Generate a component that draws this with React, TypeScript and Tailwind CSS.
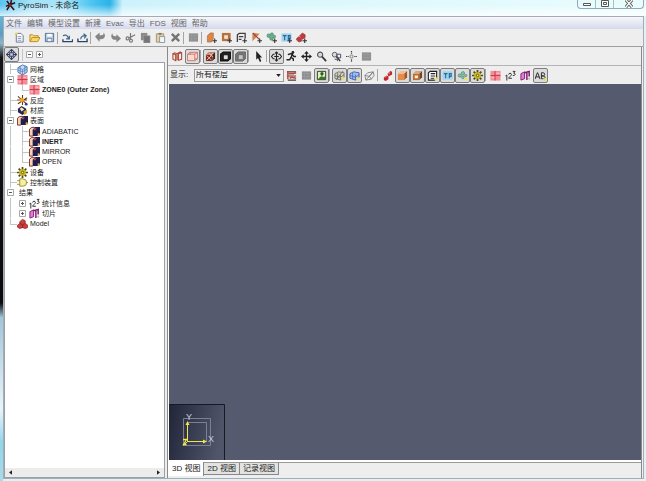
import React, { useState } from "react";

type IconName =
  | "logo" | "file" | "open" | "save" | "import" | "export" | "undo" | "redo" | "cut" | "copy" | "paste"
  | "delete" | "grayBox" | "newObst" | "newHole" | "newVent" | "newSlab" | "newPart" | "newInit" | "newGroup"
  | "wire" | "wireBox" | "texture" | "boxDark" | "boxGray" | "arrow" | "orbit" | "walk" | "pan" | "zoom"
  | "zoomBox" | "reset" | "floorRed" | "picture" | "meshA" | "meshB" | "meshC" | "redSlice" | "obst" | "hole"
  | "vent" | "init" | "particles" | "gear" | "zone" | "numbers" | "slice" | "label" | "mesh" | "reaction"
  | "material" | "surface" | "control" | "model" | "target";

const plus = <path d="M9.5 7v5M7 9.5h5" stroke="#333" strokeWidth="1.2" />;
const cube = (fill: string, side: string, top: string) => (
  <>
    <path d="M1 4h7v7H1z" fill={fill} />
    <path d="M1 4l3-3h7L8 4z" fill={top} />
    <path d="M8 4l3-3v7l-3 3z" fill={side} />
  </>
);
const tiGlyph = (
  <>
    <path d="M0.5 1.5h11v9h-11z" fill="#9fd3ee" />
    <path d="M2 4h4M4 4v5M8 9V4h2v3H8" stroke="#24699a" strokeWidth="1.2" fill="none" />
  </>
);
const numberGlyphs = (
  <>
    <path d="M0.5 6.5l1.5-1v6" stroke="#222" fill="none" />
    <path d="M4 5c0-2 3-2 3 0 0 1-3 3-3 4h3.5" stroke="#222" fill="none" />
    <path d="M8.5 1.5H11L9.5 3.5c2.500 0 2 3-1 2.500" stroke="#222" fill="none" />
  </>
);

const shapes: Record<IconName, React.ReactNode> = {
  logo: (
    <>
      <path d="M2 1l3 4-4 2M7 0l-1 5 5-2M6 6l4 5M5 6l-3 5" stroke="#3a1016" strokeWidth="1.7" fill="none" />
      <circle cx="5.5" cy="5.5" r="1.5" fill="#8d1d24" />
    </>
  ),
  file: (
    <>
      <path d="M2.5 1.5h5L10 4v7H2.500z" fill="#fff" stroke="#5f6f91" />
      <path d="M4 5h4M4 7h4M4 9h4" stroke="#8796b3" />
      <path d="M1 1h3v2H1z" fill="#f1cf5a" />
    </>
  ),
  open: (
    <>
      <path d="M1 10V3h3l1 1h5v2" fill="#f5dc8b" stroke="#b98b22" />
      <path d="M1 10.5L3.500 6H12l-2.500 4.500z" fill="#fbd767" stroke="#b98b22" />
    </>
  ),
  save: (
    <>
      <path d="M1.5 1.5h9v9h-9z" fill="#b9cde2" stroke="#4c6a91" />
      <path d="M3.5 2h5v3h-5z" fill="#fff" />
      <path d="M3.5 7h5v3.5h-5z" fill="#eef4fb" stroke="#4c6a91" strokeWidth=".7" />
    </>
  ),
  import: (
    <>
      <path d="M1 8v2.500h10.500V8" fill="none" stroke="#2b4567" strokeWidth="1.5" />
      <path d="M1 4c3-1.500 5-.5 6 3M4.500 7.500H8V4" fill="none" stroke="#3c678f" strokeWidth="1.3" />
    </>
  ),
  export: (
    <>
      <path d="M1 7v3.500h10V7" fill="none" stroke="#2b4567" strokeWidth="1.5" />
      <path d="M4 8c0-3 2-4 5-4M7 2l3 2-2 3" fill="none" stroke="#3c678f" strokeWidth="1.3" />
    </>
  ),
  undo: <path d="M0 5l5-4.500v3h2c2 0 2.500-1 2.500-3 3.500 5-.5 7.500-3 7.500H5v3z" fill="#858585" />,
  redo: <path d="M12 7L7 2.500v2H5.500C3.500 4.500 2.500 3 2.500 1-.5 6 3 8.500 5.500 8.500H7v3z" fill="#858585" />,
  cut: (
    <g fill="none" stroke="#777" strokeWidth="1.3">
      <path d="M4.500 6.500L11 3M6 1v7" />
      <circle cx="2.8" cy="7" r="1.6" />
      <circle cx="6.5" cy="9.5" r="1.6" />
    </g>
  ),
  copy: (
    <>
      <path d="M1 1h7v8H1z" fill="#8b8b8b" />
      <path d="M4 4h7v8H4z" fill="#777" stroke="#a5a5a5" strokeWidth=".6" />
    </>
  ),
  paste: (
    <>
      <path d="M1.500 2h8v9h-8z" fill="#e7cf9c" stroke="#a08f6e" />
      <path d="M4 1h3v2H4z" fill="#777" />
      <path d="M5 5h5.500v6.500H5z" fill="#f5f5f5" stroke="#8794a5" />
    </>
  ),
  delete: <path d="M2 2l8 8M10 2l-8 8" stroke="#747474" strokeWidth="2.6" />,
  grayBox: (
    <>
      <path d="M1 1.500h10v9H1z" fill="#8f8f8f" />
      <path d="M1 4h10M1 7h10M4 2v8M7.500 2v8" stroke="#a2a2a2" strokeWidth=".6" />
    </>
  ),
  newObst: (
    <>
      <path d="M1.500 4l3-3h3.500v6l-2 4H1.500z" fill="#dd8548" stroke="#a05c2c" strokeWidth=".6" />
      {plus}
    </>
  ),
  newHole: (
    <>
      <path d="M1 1h9.500v9H1z" fill="#b5713f" />
      <path d="M3.500 3.500h4v4h-4z" fill="#f7e4cf" />
      {plus}
    </>
  ),
  newVent: (
    <>
      <path d="M1.500 11V3l2-1.500H10V7M3 5h5M3 8h3" fill="none" stroke="#404040" strokeWidth="1.4" />
      {plus}
    </>
  ),
  newSlab: (
    <>
      <path d="M1.500 1v9l3-3 5-5z" fill="#d18358" />
      <path d="M2 1l7 7" stroke="#a04030" strokeWidth="1.3" />
      {plus}
    </>
  ),
  newPart: (
    <>
      <g fill="#65b18b" stroke="#39775b" strokeWidth=".5">
        <circle cx="3" cy="4" r="2" /><circle cx="6.500" cy="2.500" r="1.600" />
        <circle cx="6" cy="7" r="2" /><circle cx="9" cy="5" r="1.500" />
      </g>
      {plus}
    </>
  ),
  newInit: <>{tiGlyph}{plus}</>,
  newGroup: (
    <>
      <g fill="#c43a3a" stroke="#7e1a1a" strokeWidth=".5">
        <path d="M4 4l3-3 3 2v3L7 8z" /><path d="M0 8l3-3 3 2v3l-3 1z" />
      </g>
      {plus}
    </>
  ),
  wire: (
    <g fill="none" stroke="#b0493b" strokeWidth="1.2">
      <path d="M1 3v6l3 1.500V4zM1 3l2-1 2.500 1v7M7 3v7l3.500-1V2zM10.500 2L9 1 5.500 3" />
    </g>
  ),
  wireBox: (
    <g fill="#f7d9d2" stroke="#c9786c">
      <path d="M3.500 1.500h8v7h-8z" /><path d="M.5 3.500h8v7h-8z" /><path d="M.5 3.500l3-2M8.500 3.500l3-2M8.500 10.500l3-2" />
    </g>
  ),
  texture: (
    <>
      {cube("#7d3028", "#4b2420", "#c97b65")}
      <path d="M2 5l5 5M7 5l-5 5M4 2l5 5M9 2L6 5" stroke="#f0d3c5" strokeWidth=".9" />
    </>
  ),
  boxDark: (
    <g fill="#222" stroke="#111" strokeWidth="1.1">
      <path d="M.5 3.500l3-2.500h8v7.500l-3 2.500h-8z" /><path d="M3.500 4h5.500v5.500H3.500z" fill="#ddd" />
    </g>
  ),
  boxGray: (
    <g fill="#777" stroke="#666">
      <path d="M.5 3.500l3-2.500h8v7.500l-3 2.500h-8z" /><path d="M3.500 4h5.500v5.500H3.500z" fill="#c4c4c4" />
    </g>
  ),
  arrow: <path d="M3.500 0v9.500l2-2L7.500 12l1.500-.7L7.500 7H10z" fill="#222" />,
  orbit: (
    <g fill="none" stroke="#222" strokeWidth="1.2">
      <path d="M4 3.500H2.500L.5 6l2 2.500H4M8 3.500h1.500l2 2.500-2 2.500H8M6 1v10M4.500 2.500L6 1l1.500 1.500M4.500 9.500L6 11l1.500-1.500M3.500 6h5" />
    </g>
  ),
  walk: (
    <g fill="none" stroke="#222" strokeWidth="1.5">
      <circle cx="7.5" cy="1.5" r=".8" />
      <path d="M2 4l3-1h2L5.500 7 8 8.500V11M5.500 7L4 9.500H.5M7 4l1.500 2H11" />
    </g>
  ),
  pan: (
    <g stroke="#222" fill="#222">
      <path d="M6 2v8M2 6h8" strokeWidth="1.4" />
      <path d="M6 0l2.500 3h-5zM6 12l2.500-3h-5zM0 6l3-2.500v5zM12 6L9 3.500v5z" stroke="none" />
    </g>
  ),
  zoom: (
    <>
      <circle cx="4.500" cy="4" r="2.8" fill="#d4dce5" stroke="#555" strokeWidth="1.2" />
      <path d="M6.500 6l4.500 5" stroke="#3b3630" strokeWidth="2" />
    </>
  ),
  zoomBox: (
    <>
      <circle cx="4" cy="4" r="2.6" fill="#d4dce5" stroke="#555" />
      <path d="M6 6l4 5" stroke="#333" strokeWidth="1.6" />
      <path d="M6.500 3.500h4v4h-4zM4 9h3v2" fill="none" stroke="#445" />
    </>
  ),
  reset: (
    <g stroke="#444" fill="none">
      <path d="M6 0v3M6 9v3M0 6h3M9 6h3" strokeDasharray="1.5 .6" strokeWidth="1.3" />
      <path d="M4.500 4.500h3v3h-3z" stroke="#888" />
    </g>
  ),
  floorRed: (
    <>
      <path d="M1 2h10M1 6.500h10M2 11h9" stroke="#4d3632" strokeWidth="1.2" />
      <path d="M2 1v9M3 4h5l3-1M4 9l2-1 5 1" stroke="#c24437" strokeWidth="1.6" fill="none" />
    </>
  ),
  picture: (
    <>
      <path d="M1.500 1.500h9v9h-9z" fill="#e3efb5" stroke="#293b21" />
      <path d="M2 10l3-3 2 1 3-1v3z" fill="#367832" /><circle cx="6.500" cy="4" r="1.8" fill="#2b5e2d" />
      <path d="M6.500 4v5" stroke="#2b5e2d" />
    </>
  ),
  meshA: (
    <>
      <path d="M1 4l4-2 6 1v5l-4 3-6-2z" fill="#dcd6ab" stroke="#777" />
      <path d="M1 6l6 2 4-3M4 3v7M7 5v6M2 11l8-10" stroke="#5f6577" fill="none" strokeWidth=".9" />
      <path d="M8 8h3v3H8z" fill="#eedb7a" />
    </>
  ),
  meshB: (
    <>
      <path d="M1 4l4-2 6 1v5l-4 3-6-2z" fill="#9fbef3" stroke="#3e60a8" />
      <path d="M1 6l6 2 4-3M4 3v7M7 5v6" stroke="#3d62bb" fill="none" strokeWidth=".8" />
      <path d="M8 8h3v3H8z" fill="#eedb7a" />
    </>
  ),
  meshC: (
    <path d="M1 6l3-3 6-1 1 4-3 4-6 1zM2 11L10 2M1 6l5 1 4-5M6 7l2 3" fill="none" stroke="#777" strokeWidth=".9" />
  ),
  redSlice: (
    <>
      <path d="M6 4l3-3 2 1v3L7 7zM2 8l3-2 2 1v3l-3 2-2-1z" fill="#c4232c" />
      <path d="M7 4l2-1M3 8l2-1" stroke="#f2a0a0" />
    </>
  ),
  obst: cube("#e68b4b", "#a95325", "#f5bd8a"),
  hole: (
    <>
      {cube("#bb6b3c", "#7d4221", "#dba47a")}
      <path d="M3 6h3.500v3H3z" fill="#fff1c8" />
    </>
  ),
  vent: (
    <>
      <path d="M1.500 11V3l2-1.500h7V9L8 11zM4 4h5M4 6.500h5M4 9h4" fill="#fff" stroke="#222" strokeWidth="1.2" />
      <path d="M8 8h3v3H8z" fill="#eedb7a" />
    </>
  ),
  init: tiGlyph,
  particles: (
    <g fill="#7fc2a0" stroke="#3e7c74" strokeWidth=".6">
      <circle cx="3" cy="6" r="1.8" /><circle cx="6.500" cy="3.500" r="1.8" />
      <circle cx="6.500" cy="8" r="1.6" /><circle cx="9.500" cy="6" r="1.3" />
      <path d="M8 8h3v3H8z" fill="#f2df62" stroke="none" />
    </g>
  ),
  gear: (
    <>
      <path d="M6 0v12M0 6h12M1.800 1.800l8.400 8.400M10.200 1.800L1.800 10.200" stroke="#514b12" strokeWidth="1.9" />
      <circle cx="6" cy="6" r="3.6" fill="#cdb91c" /><circle cx="6" cy="6" r="1.3" fill="#f5efb0" stroke="#5a5210" />
    </>
  ),
  zone: (
    <>
      <path d="M.5 1h11v10.500H.5z" fill="#f58c96" /><path d="M5.500 1v10.500M.5 6h11" stroke="#c23a48" />
      <path d="M7 3.500h3M2 8.500h2.500" stroke="#fbdcdf" />
    </>
  ),
  numbers: numberGlyphs,
  slice: (
    <>
      <path d="M1 4l4-2v7.500L1 11z" fill="#e27fd4" stroke="#7d1b74" />
      <path d="M5 3l5-1.500V7M7.500 2.500V11" stroke="#7d1b74" strokeWidth="1.6" fill="none" />
      <circle cx="10" cy="9.500" r="1.2" fill="#bbb" />
    </>
  ),
  label: (
    <>
      <path d="M0 10l2.500-7H3l2.500 7M1 7.500h3.500" stroke="#222" fill="none" />
      <path d="M7 3v6.500h2c2.500 0 2.500-3 0-3H7h2c2 0 2-3.500 0-3.500z" stroke="#222" fill="none" />
      <path d="M9 9h3v3H9z" fill="#eedb62" />
    </>
  ),
  mesh: (
    <>
      <path d="M1 4l5-3 5 2v6l-5 3-5-3z" fill="#c7dcf5" stroke="#4170b0" />
      <path d="M1 6.500l5 2 5-3M1 4l5 2 5-3M6 6v6M3.500 2.500v8M8.500 2v8" stroke="#4170b0" fill="none" strokeWidth=".7" />
    </>
  ),
  reaction: (
    <>
      <path d="M6 0v11M1 1.500l9 8M11 3L1 9.500M0 5.500h11" stroke="#6b3a11" strokeWidth="1.2" />
      <circle cx="5.500" cy="5.500" r="2.3" fill="#f1a41d" /><circle cx="10" cy="10" r="1.5" fill="#333c8e" />
    </>
  ),
  material: (
    <>
      <path d="M1 4l4-3 5 3v4l-4 3-5-3z" fill="#262457" />
      <path d="M3 4l2-1.500L8 5 5 7z" fill="#f6eab9" /><path d="M7 7l4-2v4L8 11z" fill="#d4a622" />
    </>
  ),
  surface: (
    <>
      <path d="M.5 3.500L3 1.500h3V9l-2 2H.5z" fill="#f6d3b0" stroke="#7c2425" />
      <path d="M4 4l3-3h5v8l-2 2H4z" fill="#221c4d" />
      <path d="M5.500 2.500h3L7 4.500H5z" fill="#b0524a" />
      <path d="M9.500 8h2v3h-2z" fill="#e4b54a" />
    </>
  ),
  control: <path d="M0 4h3M0 8h3M3 2h3.500a4 4 0 010 8H3zM10 6h2" fill="#f7f0a2" stroke="#9a8d2d" />,
  model: (
    <g fill="#d03c3c" stroke="#7e1717" strokeWidth=".7">
      <path d="M3 4l3-2.500L9 3v3L6 7.500 3 6z" /><path d="M.5 8L3 6l3 1.500v3L3 11.500.5 10z" />
      <path d="M6 8l3-2 2.500 1.500v3L9 11.500 6 10.500z" />
    </g>
  ),
  target: (
    <g fill="none" stroke="#333a5c" strokeWidth="1.1">
      <path d="M6 .5L11.500 6 6 11.500.5 6zM6 1v10M1 6h10" /><path d="M4 4h4v4H4z" fill="#c3cbec" />
    </g>
  ),
};

function Icon({ name }: { name: IconName }) {
  return (
    <svg viewBox="0 0 12 12" className="h-[11px] w-[11px] shrink-0" aria-hidden="true">
      {shapes[name]}
    </svg>
  );
}

type ToolItem = IconName | "|" | `*${IconName}`;

function Tools({ items }: { items: ToolItem[] }) {
  return (
    <>
      {items.map((item, i) => {
        if (item === "|") return <span key={i} className="mr-[2px] h-3 w-px shrink-0 bg-[#a5a5a5]" />;
        const pressed = item.startsWith("*");
        const name = (pressed ? item.slice(1) : item) as IconName;
        return (
          <button
            key={i}
            type="button"
            aria-label={name}
            aria-pressed={pressed}
            className={
              pressed
                ? "flex h-[15px] w-[15px] shrink-0 items-center justify-center rounded-xs border border-[#7d7d7d] bg-[#dcdcdc]"
                : "flex h-[15px] w-[15px] shrink-0 items-center justify-center"
            }
          >
            <Icon name={name} />
          </button>
        );
      })}
    </>
  );
}

type Row = { text: string; icon?: IconName; level: 1 | 2; box?: "+" | "-"; bold?: boolean; last?: boolean };

const rows: Row[] = [
  { text: "网格", icon: "mesh", level: 1 },
  { text: "区域", icon: "zone", level: 1, box: "-" },
  { text: "ZONE0 (Outer Zone)", icon: "zone", level: 2, bold: true, last: true },
  { text: "反应", icon: "reaction", level: 1 },
  { text: "材质", icon: "material", level: 1 },
  { text: "表面", icon: "surface", level: 1, box: "-" },
  { text: "ADIABATIC", icon: "surface", level: 2 },
  { text: "INERT", icon: "surface", level: 2, bold: true },
  { text: "MIRROR", icon: "surface", level: 2 },
  { text: "OPEN", icon: "surface", level: 2, last: true },
  { text: "设备", icon: "gear", level: 1 },
  { text: "控制装置", icon: "control", level: 1 },
  { text: "结果", level: 1, box: "-" },
  { text: "统计信息", icon: "numbers", level: 2, box: "+" },
  { text: "切片", icon: "slice", level: 2, box: "+", last: true },
  { text: "Model", icon: "model", level: 1, last: true },
];

function Guide({ branch, last }: { branch?: boolean; last?: boolean }) {
  return (
    <svg className="h-full w-3 shrink-0" aria-hidden="true">
      <line x1="5.5" y1="0" x2="5.5" y2={last ? "50%" : "100%"} stroke="#c4c4c4" />
      {branch && <line x1="5" y1="5.5" x2="12" y2="5.5" stroke="#c4c4c4" />}
    </svg>
  );
}

function BoxGlyph({ kind }: { kind: "+" | "-" }) {
  return (
    <svg viewBox="0 0 7 7" className="h-[7px] w-[7px]" aria-hidden="true">
      <path d="M.5 .5h6v6h-6z" fill="#fff" stroke="#a8a8a8" />
      <path d={kind === "+" ? "M2 3.5h3M3.5 2v3" : "M2 3.5h3"} stroke="#555" />
    </svg>
  );
}

function TreeRow({ row }: { row: Row }) {
  return (
    <li className="flex min-h-0 items-center leading-none">
      {row.level === 2 && <Guide />}
      {row.box ? (
        <button type="button" aria-label={row.text} className="flex h-full w-3 shrink-0 items-center pl-[2px]">
          <BoxGlyph kind={row.box} />
        </button>
      ) : (
        <Guide branch last={row.last} />
      )}
      {row.icon && <Icon name={row.icon} />}
      <span className={row.bold ? "ml-[2px] font-bold whitespace-nowrap" : "ml-[2px] whitespace-nowrap"}>{row.text}</span>
    </li>
  );
}

const menus = ["文件", "编辑", "模型设置", "新建", "Evac", "导出", "FDS", "视图", "帮助"];
const tabs = ["3D 视图", "2D 视图", "记录视图"];

export default function App() {
  const [tab, setTab] = useState(0);
  return (
    <div className="flex h-screen flex-col overflow-hidden bg-[#dff2f8] bg-[linear-gradient(to_bottom,#6fcdf2_0%,#5a9ec2_7%,#8fb4c8_9%,#141414_12%,#0b0b0b_63%,#9fc6dc_66%,#e8f5fa_85%,#8fd6ee_92%,#a9dcea_100%)] bg-[length:3px_100%] bg-no-repeat pr-[2px] pb-[2px] pl-[3px] font-['Liberation_Sans','Noto_Sans_CJK_SC',sans-serif] text-[8px] leading-none text-[#222]">
      <header className="-mr-[2px] -ml-[3px] flex h-4 shrink-0 items-start justify-between bg-[#e3f9fc] bg-[linear-gradient(to_bottom,transparent_30%,#ffffffc0_100%),linear-gradient(to_right,#58c4f0_0%,#a8e2f7_5%,#a5e2f8_10%,#4fc6f0_14%,#2bb2e8_17%,#ccf2fb_19%,#d9f7fd_40%,#eafcfd_100%)] pl-[5px]">
        <h1 className="flex items-center gap-[2px] text-[8px]">
          <Icon name="logo" />
          <span>PyroSim - 未命名</span>
        </h1>
        <div className="mr-[2px] flex h-[9px] rounded-b-sm border border-t-0 border-[#93a9b1]">
          <button type="button" aria-label="最小化" className="flex w-[18px] items-center justify-center border-r border-[#a9bdc4]">
            <svg viewBox="0 0 8 8" className="h-2 w-2"><path d="M.5 3.5h7v2h-7z" fill="#fff" stroke="#555" /></svg>
          </button>
          <button type="button" aria-label="最大化" className="flex w-[18px] items-center justify-center border-r border-[#a9bdc4]">
            <svg viewBox="0 0 8 8" className="h-2 w-2"><path d="M.5 .5h7v6h-7zM2.500 2.500h3v2h-3z" fill="#fff" stroke="#555" /></svg>
          </button>
          <button type="button" aria-label="关闭" className="flex w-[29px] items-center justify-center">
            <svg viewBox="0 0 8 8" className="h-2 w-2"><path d="M1 0l6 7M7 0L1 7" stroke="#555" strokeWidth="3" /><path d="M1 0l6 7M7 0L1 7" stroke="#fff" strokeWidth="1.2" /></svg>
          </button>
        </div>
      </header>

      <div className="flex min-h-0 flex-1 flex-col border border-[#a8acb0] bg-[#eeeeee]">
        <nav className="flex h-3 shrink-0 items-center gap-[5px] bg-[linear-gradient(to_bottom,#f6f7fb,#d5d9ee)] pt-px pl-[2px] text-[#666]">
          {menus.map((m) => (
            <button key={m} type="button" className="whitespace-nowrap">{m}</button>
          ))}
        </nav>
        <div className="flex h-[18px] shrink-0 items-center border-b border-[#a0a0a0] pl-[8px]">
          <Tools items={["file", "open", "save", "|", "import", "export", "|", "undo", "redo", "cut", "copy", "paste", "delete", "|", "grayBox", "|", "newObst", "newHole", "newVent", "newSlab", "newPart", "newInit", "newGroup"]} />
        </div>

        <div className="flex min-h-0 flex-1 gap-[2px]">
          <aside className="flex w-[161px] shrink-0 flex-col">
            <div className="flex h-[15px] shrink-0 items-center gap-[3px]">
              <Tools items={["*target"]} />
              <span className="h-3 w-px bg-[#c5c5c5]" />
              <button type="button" aria-label="全部折叠"><BoxGlyph kind="-" /></button>
              <button type="button" aria-label="全部展开"><BoxGlyph kind="+" /></button>
            </div>
            <div className="flex min-h-0 flex-1 flex-col border border-[#9aa0a8] bg-white">
              <ul className="mt-px grid h-[165px] shrink-0 grid-rows-[repeat(16,minmax(0,1fr))] text-[7px]">
                {rows.map((r) => <TreeRow key={r.text} row={r} />)}
              </ul>
              <div className="mt-auto flex h-[9px] shrink-0 items-center justify-between bg-[#ececec] px-1">
                <button type="button" aria-label="向左滚动"><svg viewBox="0 0 4 6" className="h-[5px] w-[3px]"><path d="M4 0v6L0 3z" fill="#222" /></svg></button>
                <button type="button" aria-label="向右滚动"><svg viewBox="0 0 4 6" className="h-[5px] w-[3px]"><path d="M0 0v6l4-3z" fill="#222" /></svg></button>
              </div>
            </div>
          </aside>

          <main className="mr-px flex min-w-0 flex-1 flex-col border-r border-l border-[#8a8a8a]">
            <div className="flex h-[19px] shrink-0 items-center border-b border-[#b4b4b4] pl-[2px]">
              <Tools items={["wire", "*wireBox", "|", "*texture", "*boxDark", "*boxGray", "|", "arrow", "|", "*orbit", "walk", "pan", "zoom", "zoomBox", "reset", "grayBox"]} />
            </div>
            <div className="flex h-[18px] shrink-0 items-center pl-[2px]">
              <label htmlFor="floor" className="w-[24px] shrink-0 whitespace-nowrap">显示:</label>
              <div className="relative w-[90px] shrink-0">
                <select id="floor" className="block h-[13px] w-full appearance-none border border-[#9a9a9a] bg-[#f1f1f1] pl-px text-[8px] leading-none">
                  <option>所有楼层</option>
                </select>
                <svg viewBox="0 0 6 4" className="pointer-events-none absolute top-[5px] right-[3px] h-[3px] w-[5px]" aria-hidden="true"><path d="M0 0h6L3 4z" fill="#222" /></svg>
              </div>
              <Tools items={["floorRed", "grayBox", "*picture", "|", "*meshA", "*meshB", "meshC", "|", "redSlice", "*obst", "*hole", "*vent", "*init", "*particles", "*gear", "|", "zone", "numbers", "slice", "*label"]} />
            </div>
            <div className="flex min-h-0 flex-1 items-end border-l border-white bg-[#555a6e]">
              <svg viewBox="0 0 56 56" className="h-14 w-14" role="img" aria-label="坐标轴">
                <defs>
                  <linearGradient id="axes" x1="0" y1="0" x2="1" y2=".2">
                    <stop offset="0" stopColor="#222538" /><stop offset="1" stopColor="#50556a" />
                  </linearGradient>
                </defs>
                <path d="M0 0h56v56H0z" fill="url(#axes)" />
                <path d="M0 .5h55.500V56" fill="none" stroke="#171924" />
                <path d="M14.500 14.500h27v27h-27zM18.500 18.500h19v19h-19z" fill="none" stroke="#7c8091" />
                <path d="M18.500 19v18.500H37M18.500 37.500l-4 4" fill="none" stroke="#eee84a" />
                <path d="M18.500 17l-2 4h4zM38 37.500l-4-2v4z" fill="#eee84a" />
                <path d="M14 35.500h3.500l-3 5h3" fill="none" stroke="#eee84a" strokeWidth="1.3" />
                <text x="17" y="16" fontSize="9" fill="#c9ccd8">Y</text>
                <text x="39" y="38" fontSize="9" fill="#c9ccd8">X</text>
              </svg>
            </div>
            <div className="h-[3px] shrink-0 border-b border-[#999] bg-white" />
            <div role="tablist" className="flex h-[15px] shrink-0 items-start">
              {tabs.map((t, i) => (
                <button
                  key={t}
                  type="button"
                  role="tab"
                  aria-selected={tab === i}
                  onClick={() => setTab(i)}
                  className={
                    tab === i
                      ? "-mt-px h-[14px] border-r border-[#888] bg-white pr-[3px] pl-1 whitespace-nowrap"
                      : "h-3 border-r border-b border-[#888] bg-[#e3e3e3] px-[3px] whitespace-nowrap"
                  }
                >
                  {t}
                </button>
              ))}
            </div>
          </main>
        </div>
      </div>
    </div>
  );
}
